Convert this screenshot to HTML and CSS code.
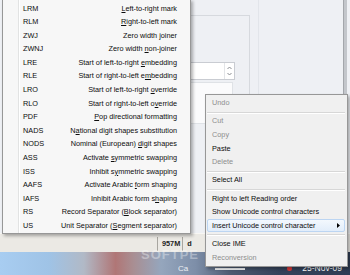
FILE: index.html
```html
<!DOCTYPE html>
<html lang="en">
<head>
    <meta charset="UTF-8">
    <meta name="viewport" content="width=device-width, initial-scale=1.0">
    <title>Insert Unicode control character</title>
    <link rel="stylesheet" href="styles.css">
</head>
<body>
<div class="screen">

    <div class="window">
        <div class="main-col">
            <div class="group">
                <div class="spin-box">
                    <span class="spin">
                        <svg width="5" height="12" viewBox="0 0 5 12">
                            <path d="M0.5 4 L2.5 2 L4.5 4" fill="none" stroke="#8a8d92" stroke-width="1"/>
                            <path d="M0.5 8 L2.5 10 L4.5 8" fill="none" stroke="#8a8d92" stroke-width="1"/>
                        </svg>
                    </span>
                </div>
                <div class="list-box"></div>
            </div>
        </div>
        <div class="side-col">
            <div class="scroll-edge"></div>
        </div>
    </div>

    <div class="statusbar">
        <div class="status-cell">957M</div>
        <div class="status-cell">d</div>
    </div>

    <div class="desktop">
        <span class="wall-text">Ca</span>
        <span class="task-bar"></span>
        <span class="task-icon"></span>
        <span class="clock">25-Nov-09</span>
    </div>

    <div class="watermark">SOFTPE</div>

    <!-- Submenu: Insert Unicode control character -->
    <ul class="menu submenu">
        <li><span>LRM</span><span><u>L</u>eft-to-right mark</span></li>
        <li><span>RLM</span><span><u>R</u>ight-to-left mark</span></li>
        <li><span>ZWJ</span><span>Zero width <u>j</u>oiner</span></li>
        <li><span>ZWNJ</span><span>Zero width <u>n</u>on-joiner</span></li>
        <li><span>LRE</span><span>Start of left-to-right <u>e</u>mbedding</span></li>
        <li><span>RLE</span><span>Start of right-to-left e<u>m</u>bedding</span></li>
        <li><span>LRO</span><span>Start of left-to-right <u>o</u>verride</span></li>
        <li><span>RLO</span><span>Start of right-to-left o<u>v</u>erride</span></li>
        <li><span>PDF</span><span><u>P</u>op directional formatting</span></li>
        <li><span>NADS</span><span>N<u>a</u>tional digit shapes substitution</span></li>
        <li><span>NODS</span><span>Nominal (European) <u>d</u>igit shapes</span></li>
        <li><span>ASS</span><span>Activate <u>s</u>ymmetric swapping</span></li>
        <li><span>ISS</span><span>Inhibit s<u>y</u>mmetric swapping</span></li>
        <li><span>AAFS</span><span>Activate Arabic <u>f</u>orm shaping</span></li>
        <li><span>IAFS</span><span>Inhibit Arabic form s<u>h</u>aping</span></li>
        <li><span>RS</span><span>Record Separator (<u>B</u>lock separator)</span></li>
        <li><span>US</span><span>Unit Separator (<u>S</u>egment separator)</span></li>
    </ul>

    <!-- Edit control context menu -->
    <ul class="menu context">
        <li class="disabled">Undo</li>
        <li class="sep"></li>
        <li class="disabled">Cut</li>
        <li class="disabled">Copy</li>
        <li>Paste</li>
        <li class="disabled">Delete</li>
        <li class="sep"></li>
        <li>Select All</li>
        <li class="sep"></li>
        <li>Right to left Reading order</li>
        <li>Show Unicode control characters</li>
        <li class="active">Insert Unicode control character
            <svg class="arrow" width="3" height="5" viewBox="0 0 3 5"><path d="M0 0 L3 2.5 L0 5 Z" fill="#000"/></svg>
        </li>
        <li class="sep"></li>
        <li>Close IME</li>
        <li class="disabled">Reconversion</li>
    </ul>

</div>
</body>
</html>
```

FILE: styles.css
```css
body {
    margin: 0;
    overflow: hidden;
    font-family: 'Liberation Sans', Arial, sans-serif;
    font-size: 7.3px;
    color: #0d0d0d;
}
.screen {
    position: relative;
    width: 350px;
    height: 275px;
    overflow: hidden;
}

/* window behind the menus */
.window {
    display: flex;
    height: 233px;
    background-color: #eef0f4;
}
.main-col {
    width: 250px;
    padding-top: 15px;
    box-sizing: border-box;
}
.group {
    margin-left: 150px;
    height: 100%;
    border-top: 1px solid #d6d9de;
    border-right: 1px solid #d6d9de;
}
.spin-box {
    display: flex;
    justify-content: flex-end;
    margin-top: 46px;
    margin-right: 14px;
    height: 18px;
    background-color: #fff;
    border: 1px solid #c9ccd2;
    box-sizing: border-box;
}
.spin {
    display: flex;
    align-items: center;
    justify-content: center;
    width: 9px;
    border-left: 1px solid #e3e5e8;
}
.list-box {
    margin-top: 2px;
    margin-right: 16px;
    height: 40px;
    background-color: #fbfbfc;
    border: 1px solid #dfe2e6;
}
.side-col {
    flex: 1;
    display: flex;
    justify-content: flex-end;
    margin-left: 8px;
    border-left: 1px solid #e2e5ea;
}
.scroll-edge {
    width: 3px;
    margin-right: 3px;
    background-color: #c3c6cb;
    border-left: 1px solid #a3a6ab;
}

/* status bar */
.statusbar {
    display: flex;
    height: 19px;
    padding-left: 157px;
    background-color: #ebe9e4;
    border-top: 1px solid #f8f7f4;
    box-sizing: border-box;
}
.status-cell {
    margin-top: 3px;
    height: 14px;
    line-height: 14px;
    padding: 0 2px 0 4px;
    border-left: 1px solid #a8a6a0;
    font-weight: bold;
    color: #222;
}

/* desktop strip */
.desktop {
    display: flex;
    align-items: flex-end;
    height: 23px;
    padding: 0 0 2px 178px;
    box-sizing: border-box;
    background: linear-gradient(90deg, #a8cdf1 0, #9fc3e6 14%, #b1b9c6 24%, #b07676 33%, #a98e92 38%, #95a6bd 46%, #7d8ea8 56%, #4c5a70 66%, #34425a 80%, #2f3d54 100%);
    color: #fff;
    line-height: 9px;
}
.wall-text {
    font-size: 8px;
    opacity: 0.85;
}
.task-bar {
    width: 30px;
    height: 2px;
    margin: 0 0 3px 27px;
    background-color: #f2f4f7;
}
.task-icon {
    width: 5px;
    height: 5px;
    margin: 0 0 2px 42px;
    border-radius: 50%;
    background-color: #d83a3a;
}
.clock {
    margin-left: 10px;
    font-size: 8.5px;
}
.watermark {
    position: absolute;
    left: 141px;
    top: 248px;
    white-space: nowrap;
    font-size: 13px;
    font-weight: bold;
    letter-spacing: 1px;
    color: rgba(255, 255, 255, 0.35);
    line-height: 13px;
}

/* menus */
.menu {
    position: absolute;
    margin: 0;
    list-style: none;
    border: 1px solid #979797;
    box-sizing: border-box;
    box-shadow: 2px 2px 3px rgba(0, 0, 0, 0.3);
}
.menu li {
    height: 13.6px;
    line-height: 13.6px;
    white-space: nowrap;
}
.submenu {
    left: 2px;
    top: -1px;
    width: 189px;
    padding: 1.5px 0 0;
    background: linear-gradient(90deg, transparent 15px, #e2e3e3 15px, #e2e3e3 16px, #fff 16px, #fff 17px, transparent 17px), #f7f7f7;
}
.submenu li {
    display: flex;
    justify-content: space-between;
    padding: 0 13px 0 20px;
}
.context {
    left: 205px;
    top: 94px;
    width: 143px;
    padding: 1.2px 1px 1.5px;
    background-color: #f0f0f0;
}
.context li {
    display: flex;
    align-items: center;
    justify-content: space-between;
    padding: 0 4px 0 4px;
    border: 1px solid transparent;
    margin: 0 1px 0 0;
    box-sizing: border-box;
}
.context li.disabled {
    color: #8e8e8e;
}
.context li.active {
    background: linear-gradient(#f3f8fd, #e2edfa);
    border-color: #bcd5f2;
    border-radius: 2px;
}
.context li.sep {
    height: 4.6px;
    padding: 0;
    border: none;
    background: linear-gradient(transparent 1.8px, #d7d7d7 1.8px, #d7d7d7 2.8px, #fff 2.8px, #fff 3.8px, transparent 3.8px);
}
u {
    text-decoration-thickness: 1px;
    text-underline-offset: 1px;
}
```
